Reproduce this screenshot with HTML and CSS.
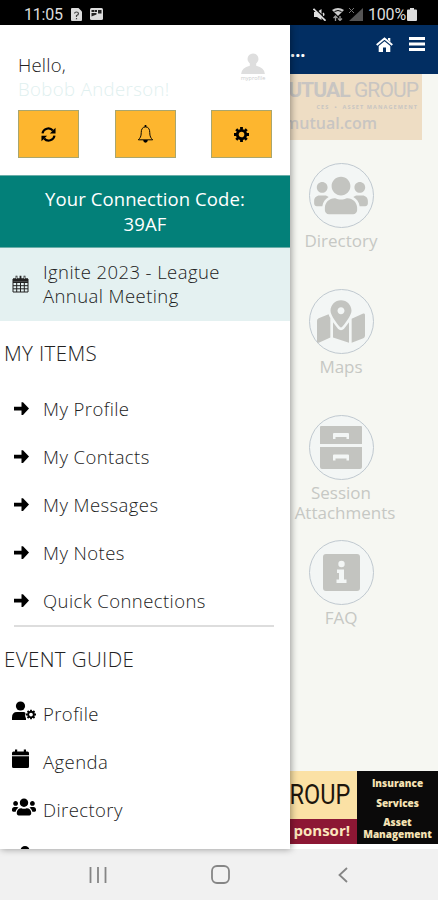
FILE: index.html
```html
<!DOCTYPE html>
<html lang="en">
<head>
<meta charset="utf-8">
<title>Ignite 2023 - League Annual Meeting</title>
<link rel="stylesheet" href="styles.css">
</head>
<body>
<svg width="0" height="0" class="defs">
  <defs>
    <symbol id="arrow" viewBox="0 0 16 16"><path d="M0 6h8V1.200h1.600L16 8l-6.400 6.800H8V10H0z"/></symbol>
    <symbol id="users" viewBox="0 0 640 512"><path d="M96 224c35.300 0 64-28.700 64-64s-28.700-64-64-64-64 28.700-64 64 28.700 64 64 64zm448 0c35.300 0 64-28.700 64-64s-28.700-64-64-64-64 28.700-64 64 28.700 64 64 64zm32 32h-64c-17.600 0-33.500 7.100-45.100 18.600 40.300 22.100 68.900 62 75.100 109.400h66c17.700 0 32-14.300 32-32v-32c0-35.300-28.700-64-64-64zm-256 0c61.900 0 112-50.100 112-112S381.900 32 320 32 208 82.100 208 144s50.100 112 112 112zm76.800 32h-8.300c-20.800 10-43.900 16-68.500 16s-47.600-6-68.500-16h-8.300C179.600 288 128 339.600 128 403.200V432c0 26.500 21.500 48 48 48h288c26.500 0 48-21.500 48-48v-28.800c0-63.600-51.600-115.200-115.200-115.200zm-223.700-13.400C161.500 263.100 145.600 256 128 256H64c-35.300 0-64 28.700-64 64v32c0 17.700 14.300 32 32 32h65.900c6.300-47.400 34.900-87.300 75.200-109.400z"/></symbol>
    <symbol id="gear" viewBox="0 0 16 16"><circle cx="8" cy="8" r="4.500" fill="none" stroke="currentColor" stroke-width="3"/><path d="M8 0v3M8 13v3M0 8h3M13 8h3M2.400 2.400l2 2M11.600 11.600l2 2M2.400 13.600l2-2M11.600 4.400l2-2" fill="none" stroke="currentColor" stroke-width="3"/></symbol>
  </defs>
</svg>
<div class="phone">
  <header class="status">
    <span class="clock">11:05</span>
    <svg class="st-sim" viewBox="0 0 11 13"><path d="M0 1q0-1 1-1h6.500L11 3.500V12q0 1-1 1H1q-1 0-1-1z" fill="#ddd"/><path d="M3.500 5.500Q3.700 4 5.500 4t2 1.500Q7.500 7 5.500 7.500V9M5.500 10v1.200" fill="none" stroke="#444" stroke-width="1.200"/></svg>
    <svg class="st-pic" viewBox="0 0 13 12"><rect width="13" height="12" rx="1.500" fill="#ddd"/><path d="M1.500 2h3v2h-3zM5 2h2v2H5zM8 2h3.500v3.500H8zM1.500 5h5v1.500l-5 2z" fill="#222"/></svg>
    <span class="grow"></span>
    <svg class="st-mute" viewBox="0 0 13 13"><path d="M1 4h3l4.500-3v11L4 9H1z" fill="#ddd"/><path d="M10 5q1.500 1.500 0 3" fill="none" stroke="#ddd" stroke-width="1.500"/><path d="M1.500 0l12 12" stroke="#000" stroke-width="1.500"/><path d="M.5 .8l12 12" stroke="#ddd" stroke-width="1.700"/></svg>
    <svg class="st-wifi" viewBox="0 0 12 13"><path d="M0 2q6-4 12 0L6 8z" fill="#ccc"/><path d="M2.500 3.500q3.500-2 7 0" fill="none" stroke="#000"/><path d="M3.500 13V8M1.500 10l2-2 2 2M8 8v4.500M6 10.500l2 2 2-2" fill="none" stroke="#999" stroke-width="1.300"/></svg>
    <svg class="st-cell" viewBox="0 0 14 13"><path d="M14 0v13H0z" fill="#555"/><path d="M0 0l5 5M5 0L0 5" stroke="#777"/></svg>
    <span class="pct">100%</span>
    <svg class="st-bat" viewBox="0 0 10 13"><path d="M3 0h4v1.500h2q1 0 1 1V12q0 1-1 1H1q-1 0-1-1V2.500q0-1 1-1h2z" fill="#ddd"/></svg>
  </header>

  <div class="body">
    <aside class="drawer">
      <div class="hello">
        <div class="greet"><div class="hi">Hello,</div><div class="name">Bobob Anderson!</div></div>
        <div class="avatar">
          <svg viewBox="0 0 26 23"><circle cx="13" cy="6.500" r="6"/><path d="M9.500 10h7v4q9 2 9.500 9H0q.5-7 9.500-9z"/></svg>
          <span>myprofile</span>
        </div>
      </div>
      <div class="actions">
        <div class="btn"><svg viewBox="0 0 16 16"><path d="M1.600 6.800A6.300 6.300 0 0 1 12.600 3.800M14.400 9.200A6.300 6.300 0 0 1 3.400 12.200" fill="none" stroke="currentColor" stroke-width="2.300"/><path d="M15.500.8v6h-6zM.5 15.200v-6h6z"/></svg></div>
        <div class="btn"><svg class="bell" viewBox="0 0 16 17"><path d="M8 1.800C4.800 1.800 4 4.500 4 7c0 4-1.200 5.500-2.800 7h13.600C13.200 12.500 12 11 12 7c0-2.500-.8-5.200-4-5.200z" fill="none" stroke="currentColor" stroke-width=".9"/><path d="M7.200 0h1.600v2H7.200zM5.800 14.200h4.400Q10 16.800 8 16.800t-2.200-2.600z"/></svg></div>
        <div class="btn"><svg><use href="#gear"/></svg></div>
      </div>
      <div class="code">Your Connection Code:<br>39AF</div>
      <div class="event">
        <svg viewBox="0 0 17 18"><path d="M1 4h15v13H1zM1 7.500h15M1 10.700h15M1 13.800h15M4.700 7v10M8.500 7v10M12.300 7v10" fill="none" stroke="#222" stroke-width="1"/><path d="M1 3.500h15v3.300H1z" fill="#222"/><path d="M4.500.8v4M12.500.8v4M8.500.8v4" stroke="#222" stroke-width="1.800"/><path d="M4.500 1.500v2.500M12.500 1.500v2.500" stroke="#e4f1f1" stroke-width=".6"/></svg>
        <div>Ignite 2023 - League<br>Annual Meeting</div>
      </div>
      <h2>MY ITEMS</h2>
      <ul class="items">
        <li><svg><use href="#arrow"/></svg>My Profile</li>
        <li><svg><use href="#arrow"/></svg>My Contacts</li>
        <li><svg><use href="#arrow"/></svg>My Messages</li>
        <li><svg><use href="#arrow"/></svg>My Notes</li>
        <li><svg><use href="#arrow"/></svg>Quick Connections</li>
      </ul>
      <div class="rule"></div>
      <h2 class="guide-title">EVENT GUIDE</h2>
      <ul class="guide">
        <li><svg viewBox="0 0 24 20"><circle cx="8.500" cy="5" r="4.600"/><path d="M0 19v-2.500Q0 11 5 11h7q1.500 0 1.500 1.500-1 2.500.5 5V19z"/><use href="#gear" x="14" y="8.500" width="10" height="10"/></svg>Profile</li>
        <li><svg viewBox="0 0 24 20"><path d="M0 6.200V4q0-1.500 1.500-1.500H3V.5h2.200v2h6.600v-2H14v2h1.500Q17 2.500 17 4v2.200zM0 7.300h17V17.500q0 1.500-1.500 1.500h-14Q0 19 0 17.500z"/></svg>Agenda</li>
        <li><svg><use href="#users"/></svg>Directory</li>
        <li><svg viewBox="0 0 24 20"><circle cx="13" cy="5.500" r="4.500"/></svg></li>
      </ul>
    </aside>

    <main class="page">
      <div class="topbar">
        <span class="dots">...</span>
        <svg class="home" viewBox="0 0 17 15"><path d="M8.500 4.200l5.800 4.900V15H10v-4.500H7V15H2.700V9.100z"/><path d="M.7 8l7.800-6.600L16.300 8" fill="none" stroke="#fff" stroke-width="1.900"/><path d="M12 1h2.300v4L12 3z"/></svg>
        <svg class="burger" viewBox="0 0 16 14"><path d="M0 0h16v3H0zM0 5.500h16v3H0zM0 11h16v3H0z"/></svg>
      </div>
      <div class="banner">
        <div class="b1"><b>UTUAL</b> GROUP</div>
        <div class="b2">CES &nbsp;•&nbsp; ASSET MANAGEMENT</div>
        <div class="b3">mutual.com</div>
      </div>
      <nav class="tiles">
        <div class="tile"><div class="ring"><svg class="t-users"><use href="#users"/></svg></div><span>Directory</span></div>
        <div class="tile"><div class="ring"><svg class="t-map" viewBox="0 0 576 512"><path d="M288 0c-69.590 0-126 56.410-126 126 0 56.260 82.350 158.800 113.900 196.020 6.390 7.540 17.820 7.540 24.200 0C331.650 284.800 414 182.260 414 126 414 56.410 357.590 0 288 0zm0 168c-23.200 0-42-18.800-42-42s18.800-42 42-42 42 18.800 42 42-18.800 42-42 42zM20.120 215.950A32 32 0 0 0 0 245.660v250.320c0 11.320 11.430 19.060 21.940 14.860L160 448V214.920c-8.840-15.980-16.070-31.540-21.250-46.420zM288 359.670c-14.070 0-27.380-6.180-36.510-16.960-19.660-23.200-40.570-49.620-59.490-76.720v182l192 64V266c-18.920 27.090-39.820 53.520-59.490 76.720-9.130 10.770-22.440 16.950-36.510 16.950zm266.060-198.510L416 224v288l139.880-55.950A32 32 0 0 0 576 426.340V176.020c0-11.320-11.430-19.060-21.940-14.860z"/></svg></div><span>Maps</span></div>
        <div class="tile"><div class="ring"><svg class="t-box" viewBox="0 0 42 43"><path fill-rule="evenodd" d="M1 0h40q1 0 1 1v17H0V1q0-1 1-1zM13 8v5h2.500v-2h11v2H29V8q0-1-1-1H14q-1 0-1 1zM0 21h42v20q0 2-2 2H2q-2 0-2-2zM13 29.500v5h2.500v-2h11v2H29v-5q0-1-1-1H14q-1 0-1 1z"/></svg></div><span>Session</span><span class="second">Attachments</span></div>
        <div class="tile"><div class="ring"><svg class="t-info" viewBox="0 0 37 37"><rect width="37" height="37" rx="3"/><circle cx="18.500" cy="10" r="3.200" fill="#f3f6f5"/><path d="M14 15.500h7v10h2.500V29H13.500v-3.500H16V19h-2z" fill="#f3f6f5"/></svg></div><span>FAQ</span></div>
      </nav>
      <div class="ad">
        <div class="ad-left"><div class="ad-name"><span>ROUP</span></div><div class="ad-sponsor"><span>ponsor!</span></div></div>
        <div class="ad-right"><span>Insurance</span><span>Services</span><span>Asset<br>Management</span></div>
      </div>
    </main>
  </div>

  <footer class="navbar">
    <svg class="recents" viewBox="0 0 18 16"><path d="M1.500 0v16M9 0v16M16.500 0v16"/></svg>
    <svg class="homebtn" viewBox="0 0 19 19"><rect x="1" y="1" width="17" height="17" rx="5"/></svg>
    <svg class="back" viewBox="0 0 10 16"><path d="M9 1L1.500 8 9 15"/></svg>
  </footer>
</div>
</body>
</html>
```
FILE: styles.css
```css
* { box-sizing: border-box; }
body { margin: 0; font-family: "Open Sans", sans-serif; font-weight: 300; color: #222; }
svg { display: block; flex: none; fill: currentColor; }
.defs { position: absolute; }
.phone { width: 438px; height: 900px; display: flex; flex-direction: column; overflow: hidden; background: #fff; }

.status { flex: none; height: 25px; background: #000; color: #ddd; display: flex; align-items: center; padding: 3px 21px 0 24px; font-family: Roboto, sans-serif; font-weight: 400; font-size: 16px; }
.clock { width: 47px; letter-spacing: -0.2px; }
.st-sim { width: 11px; height: 13px; margin-right: 8px; }
.st-pic { width: 13px; height: 12px; }
.grow { flex: 1; }
.st-mute { width: 13px; height: 13px; margin-right: 6px; }
.st-wifi { width: 12px; height: 13px; margin-right: 5px; }
.st-cell { width: 14px; height: 13px; margin-right: 5px; }
.pct { width: 39px; letter-spacing: -0.2px; white-space: nowrap; }
.st-bat { width: 10px; height: 13px; }

.body { flex: 1; min-height: 0; display: flex; }
.drawer { width: 290px; flex: none; height: 824px; overflow: hidden; background: #fff; position: relative; box-shadow: 1px 0 7px rgba(0,0,0,.4); z-index: 1; font-size: 18.500px; letter-spacing: .42px; }
.hello { height: 85px; padding: 28px 24px 0 18px; display: flex; justify-content: space-between; line-height: 24px; }
.hi { letter-spacing: .2px; }
.name { color: #dff0ef; }
.avatar { width: 26px; color: #dedede; display: flex; flex-direction: column; align-items: center; }
.avatar svg { width: 24px; height: 21px; }
.avatar span { font-size: 5.500px; line-height: 8px; font-weight: 400; letter-spacing: 0; color: #ccc; }
.actions { height: 65px; padding: 0 18px; display: flex; justify-content: space-between; }
.btn { width: 61px; height: 48px; background: #fdb62f; border: 1px solid #a9a66e; display: flex; align-items: center; justify-content: center; color: #000; }
.btn svg { width: 15px; height: 15px; }
.btn .bell { width: 17px; height: 18px; }
.code { height: 73px; background: #038079; border: 1px solid #6aaea9; border-width: 1px 0; color: #fff; text-align: center; font-weight: 400; font-size: 18.500px; letter-spacing: .1px; line-height: 24.500px; padding-top: 11px; }
.event { height: 73px; background: #e4f1f1; display: flex; align-items: center; line-height: 24.500px; padding: 0 0 1px 12px; }
.event svg { width: 17px; height: 18px; margin-right: 14px; }
h2 { margin: 0; font-size: 20.500px; letter-spacing: .4px; font-weight: 300; line-height: 64px; height: 63.500px; padding-left: 4px; }
.guide-title { height: 61px; line-height: 62px; }
ul { margin: 0; padding: 0; list-style: none; }
li { height: 48.100px; display: flex; align-items: center; }
.items svg { width: 15px; height: 15px; margin: 0 14px; color: #000; }
.rule { width: 260px; height: 2px; background: #ddd; margin: 0 0 1px 14px; }
.guide svg { width: 24px; height: 20px; margin: -4px 7px 0 12px; color: #000; }

.page { flex: 1; min-width: 0; background: #f6f7f2; display: flex; flex-direction: column; overflow: hidden; }
.topbar { height: 49px; background: #022e62; color: #fff; display: flex; padding: 12px 13px 0 0; flex: none; }
.dots { font-size: 18px; font-weight: 700; line-height: 26px; flex: 1; }
.home { width: 17px; height: 15px; margin-right: 16px; }
.burger { width: 16px; height: 14px; }
.banner { width: 132px; height: 66px; flex: none; background: #eeddc4; color: #c8c5c2; overflow: hidden; display: flex; flex-direction: column; align-items: flex-end; padding: 4px 4px 0 0; white-space: nowrap; }
.b1 { font: 400 21px/25px "Roboto", sans-serif; letter-spacing: -.9px; }
.b1 b { font-weight: 700; }
.b2 { font: 700 5.500px/8px "Open Sans", sans-serif; letter-spacing: 1.100px; }
.b3 { font: 600 16px/24px "Open Sans", sans-serif; margin-right: 41px; }
.tiles { width: 102px; padding-top: 23px; flex: 1; color: #c3c4c0; }
.tile { height: 125.800px; display: flex; flex-direction: column; align-items: center; text-align: center; font-size: 17px; line-height: 20px; }
.tile span { margin-top: 3px; font-weight: 400; color: #c6c8c4; }
.tile .second { margin: 0 0 0 8px; }
.ring { width: 65px; height: 65px; flex: none; border: 1.500px solid #c0c9d0; border-radius: 50%; background: #f3f6f5; display: flex; align-items: center; justify-content: center; }
.t-users { width: 54px; height: 43px; }
.t-map { width: 48px; height: 43px; }
.t-box { width: 42px; height: 43px; }
.t-info { width: 37px; height: 37px; }
.ad { height: 78px; flex: none; display: flex; border-bottom: 5px solid #fff; }
.ad-left { width: 67px; overflow: hidden; display: flex; flex-direction: column; }
.ad-left div { display: flex; justify-content: flex-end; padding-right: 7px; }
.ad-name { height: 48px; background: #fbe1a5; color: #1d160c; font: 400 28px/48px "Roboto", sans-serif; }
.ad-name span { transform: scaleX(.84); transform-origin: right; }
.ad-sponsor { flex: 1; background: #8c1734; color: #fbe6bd; font: 700 15px/23px "Open Sans", sans-serif; }
.ad-right { flex: 1; background: #0b0a0a; color: #f5e3b5; font: 800 10px/12px "Open Sans", sans-serif; text-align: center; display: flex; flex-direction: column; justify-content: space-between; padding: 6px 0 4px; }

.navbar { flex: none; height: 51px; background: #f1f1f1; display: flex; align-items: center; padding-left: 89px; }
.navbar svg { fill: none; stroke: #858585; stroke-width: 1.800; }
.recents { width: 18px; height: 16px; margin-right: 104px; }
.homebtn { width: 19px; height: 19px; margin-right: 108px; }
.back { width: 10px; height: 16px; }
```
